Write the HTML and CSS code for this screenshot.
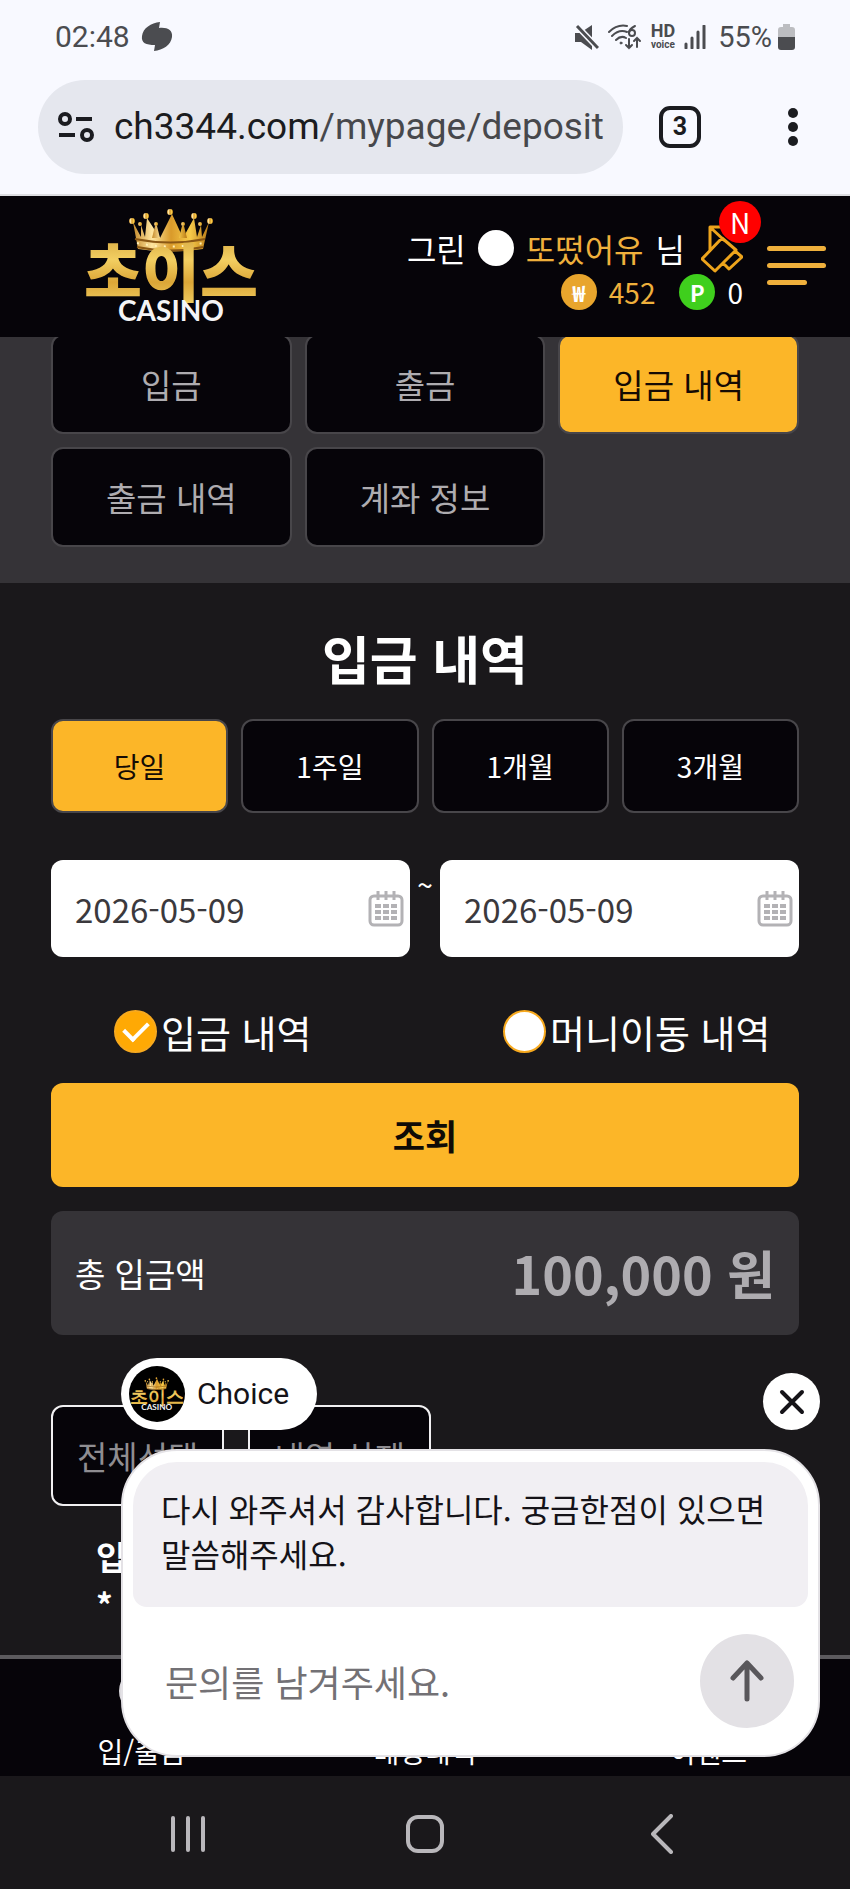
FILE: index.html
```html
<!DOCTYPE html>
<html lang="ko">
<head>
    <meta charset="UTF-8">
    <meta name="viewport" content="width=device-width, initial-scale=1.0">
    <title>입금 내역</title>
    <link rel="stylesheet" href="styles.css">
</head>
<body>

<!-- Phone status bar -->
<div class="status-bar">
    <span class="clock">02:48</span>
    <svg class="app-icon" width="32" height="30" viewBox="0 0 32 30"><path d="M19 0L18 6C26 5 32 8 31 15C30 23 22 28 13 29L14 23C5 23 0 21 1 14C2 6 10 1 19 0Z" fill="#4b4c50"/></svg>
    <div class="status-icons">
        <svg width="24" height="26" viewBox="0 0 24 26"><path d="M0 9H5L17 1V26L6 18H0Z" fill="#4b4c50"/><path d="M1 1L23 24" stroke="#f8f9ff" stroke-width="6"/><path d="M2 2L23 24" stroke="#4b4c50" stroke-width="3"/></svg>
        <svg class="wifi" width="34" height="26" viewBox="0 0 34 26" fill="none" stroke="#4b4c50" stroke-width="2" stroke-linecap="round"><path d="M1 8Q9 0 19 2M4 12Q11 5 19 8M8 16Q13 11 18 14"/><circle cx="13" cy="19" r="1" fill="#4b4c50" stroke-width="1"/><path d="M27 2Q21 5 21 9"/><circle cx="24" cy="9" r="3"/><path d="M21 15V24M18 21L21 24L24 21M29 23V14M26 17L29 14L32 17"/></svg>
        <span class="hd"><b>HD</b><small>voice</small></span>
        <svg width="22" height="24" viewBox="0 0 22 24"><path d="M2 19V23M8 13V23M14 7V23M20 1V23" stroke="#4b4c50" stroke-width="3" stroke-linecap="round"/></svg>
        <span class="percent">55%</span>
        <svg class="battery" width="17" height="26" viewBox="0 0 17 26"><path d="M5 0H12V3H14Q17 3 17 6V14H0V6Q0 3 3 3H5Z" fill="#bcbdc1"/><path d="M0 13H17V23Q17 26 14 26H3Q0 26 0 23Z" fill="#4b4c50"/></svg>
    </div>
</div>

<!-- Browser address bar -->
<div class="address-bar">
    <div class="address">
        <svg width="36" height="30" viewBox="0 0 36 30" fill="none" stroke="#1b1c20" stroke-width="4"><circle cx="7" cy="7" r="5"/><path d="M18 7H34M1 23H17"/><circle cx="29" cy="23" r="5"/></svg>
        <a class="url" href="#">ch3344.com<span>/mypage/deposit</span></a>
    </div>
    <button class="tab-count" type="button">3</button>
    <button class="more" type="button" aria-label="메뉴"><i></i><i></i><i></i></button>
</div>

<div class="site">
    <header class="header">
        <a class="logo" href="#" aria-label="초이스 CASINO">
            <svg width="176" height="118" viewBox="0 0 176 118">
                <defs>
                    <linearGradient id="gold" x1="0" y1="0" x2="0" y2="1">
                        <stop offset="0" stop-color="#c8962f"/>
                        <stop offset=".4" stop-color="#f3cf62"/>
                        <stop offset=".65" stop-color="#dba637"/>
                        <stop offset="1" stop-color="#f8dc70"/>
                    </linearGradient>
                    <linearGradient id="crownGold" x1="0" y1="0" x2="1" y2="0">
                        <stop offset="0" stop-color="#c58a2b"/>
                        <stop offset=".25" stop-color="#ffe6a0"/>
                        <stop offset=".5" stop-color="#d99a2a"/>
                        <stop offset=".75" stop-color="#f7cb4a"/>
                        <stop offset="1" stop-color="#b87916"/>
                    </linearGradient>
                </defs>
                <g id="logoArt">
                    <g fill="url(#crownGold)">
                        <path d="M49 14L57 29L57 17L61 29L63 10L76 30L88 6L99 30L110 10L113 29L117 17L118 29L125 14L119 41Q87 46 54 41Z"/>
                        <circle cx="48" cy="13" r="3"/><circle cx="62" cy="8" r="3"/><circle cx="86" cy="4" r="3"/><circle cx="110" cy="8" r="3"/><circle cx="126" cy="13" r="3"/>
                        <circle cx="56" cy="16" r="2"/><circle cx="72" cy="16" r="2"/><circle cx="99" cy="16" r="2"/><circle cx="116" cy="16" r="2"/>
                        <path d="M71 18H73L76 30H68ZM98 18H100L103 30H95Z"/>
                    </g>
                    <path d="M51 31Q87 38 121 31M53 39Q87 46 119 39" fill="none" stroke="#8a5714" stroke-width="2"/>
                    <path d="M53 35Q87 42 119 35" fill="none" stroke="#fff0b8" stroke-width="2" stroke-dasharray="2 7"/>
                    <text class="logo-name" x="87" y="88" text-anchor="middle">초이스</text>
                    <text class="logo-sub" x="87" y="113" text-anchor="middle">CASINO</text>
                </g>
            </svg>
        </a>
        <div class="user">
            <div class="user-row">
                <span>그린</span>
                <span class="level"></span>
                <span class="gold">또떴어유</span>
                <span>님</span>
                <a class="message" href="#" aria-label="쪽지">
                    <svg width="42" height="50" viewBox="0 0 42 50" fill="none" stroke="#eda41c" stroke-width="3" stroke-linejoin="round"><path d="M1 36L21 15L35 27L14 48ZM9 27V4H30V17M10 5L24 18M22 40L34 28L41 34L28 46Z"/></svg>
                    <span class="badge">N</span>
                </a>
            </div>
            <div class="user-row points">
                <span class="coin">₩</span>
                <span class="gold">452</span>
                <span class="coin coin-point">P</span>
                <span>0</span>
            </div>
        </div>
        <button class="burger" type="button" aria-label="전체 메뉴"><i></i><i></i><i></i></button>
    </header>

    <nav class="sub-nav">
        <a href="#">입금</a>
        <a href="#">출금</a>
        <a class="active" href="#">입금 내역</a>
        <a href="#">출금 내역</a>
        <a href="#">계좌 정보</a>
    </nav>

    <main class="content">
        <h1>입금 내역</h1>
        <form>
            <div class="periods">
                <button class="active" type="button">당일</button>
                <button type="button">1주일</button>
                <button type="button">1개월</button>
                <button type="button">3개월</button>
            </div>

            <div class="dates">
                <label class="date">
                    <input type="text" value="2026-05-09" aria-label="시작일">
                    <svg width="36" height="36" viewBox="0 0 36 36"><use href="#calendar"/></svg>
                </label>
                <span class="tilde">~</span>
                <label class="date">
                    <input type="text" value="2026-05-09" aria-label="종료일">
                    <svg width="36" height="36" viewBox="0 0 36 36">
                        <g id="calendar" fill="none" stroke="#b3b2b5">
                            <rect x="2" y="5" width="32" height="29" rx="4" stroke-width="3"/>
                            <path d="M10 0V9M18 0V9M26 0V9" stroke-width="3"/>
                            <path d="M7 15H29M7 21H29M7 27H29" stroke-width="4" stroke-dasharray="6 2"/>
                        </g>
                    </svg>
                </label>
            </div>

            <div class="types">
                <label><input type="radio" name="type" checked>입금 내역</label>
                <label><input type="radio" name="type">머니이동 내역</label>
            </div>

            <button class="search" type="button">조회</button>
        </form>

        <div class="total">
            <span>총 입금액</span>
            <strong>100,000 원</strong>
        </div>

        <div class="actions">
            <button type="button">전체선택</button>
            <button type="button">내역 삭제</button>
        </div>

        <div class="notice">
            <p>입금</p>
            <p>*</p>
        </div>
    </main>

    <nav class="bottom-nav">
        <a href="#"><i></i>입/출금</a>
        <a href="#"><i></i>배팅내역</a>
        <a href="#"><i></i>이벤트</a>
    </nav>

    <!-- Chat popup, lies over the page -->
    <div class="chat">
        <div class="chat-top">
            <div class="chat-name">
                <span class="avatar"><svg width="52" height="34" viewBox="0 0 176 116"><use href="#logoArt"/></svg></span>
                Choice
            </div>
            <button class="chat-close" type="button" aria-label="닫기">
                <svg width="26" height="26" viewBox="0 0 26 26"><path d="M3 3L23 23M23 3L3 23" stroke="#151318" stroke-width="4" stroke-linecap="round"/></svg>
            </button>
        </div>
        <div class="chat-card">
            <p class="chat-message">다시 와주셔서 감사합니다. 궁금한점이 있으면 말씀해주세요.</p>
            <div class="chat-form">
                <input type="text" placeholder="문의를 남겨주세요." aria-label="문의">
                <button type="button" aria-label="보내기">
                    <svg width="36" height="42" viewBox="0 0 36 42" fill="none" stroke="#59575b" stroke-width="5" stroke-linecap="round" stroke-linejoin="round"><path d="M18 39V3M4 18L18 3L32 18"/></svg>
                </button>
            </div>
        </div>
    </div>
</div>

<!-- Phone navigation keys -->
<nav class="phone-nav">
    <button type="button" aria-label="최근 앱"><svg width="36" height="38" viewBox="0 0 36 38"><path d="M3 3V35M18 3V35M33 3V35" stroke="#b9b7bb" stroke-width="4" stroke-linecap="round"/></svg></button>
    <button type="button" aria-label="홈"><svg width="38" height="38" viewBox="0 0 38 38"><rect x="2" y="2" width="34" height="34" rx="10" fill="none" stroke="#b9b7bb" stroke-width="4"/></svg></button>
    <button type="button" aria-label="뒤로"><svg width="22" height="40" viewBox="0 0 22 40"><path d="M20 2L2 20L20 38" fill="none" stroke="#b9b7bb" stroke-width="4" stroke-linejoin="round" stroke-linecap="round"/></svg></button>
</nav>

</body>
</html>
```

FILE: styles.css
```css
* {
    box-sizing: border-box;
}
body {
    margin: 0;
    background-color: #1a181b;
    color: #fff;
    font-family: "Noto Sans CJK KR", "Noto Sans", sans-serif;
    font-size: 33px;
    line-height: 48px;
}
button, input {
    margin: 0;
    padding: 0;
    border: none;
    background: none;
    color: inherit;
    font: inherit;
}
button {
    cursor: pointer;
}
a {
    color: inherit;
    text-decoration: none;
}
h1, p {
    margin: 0;
}
svg {
    display: block;
    flex: none;
}

/* Status bar */
.status-bar {
    display: flex;
    align-items: center;
    height: 80px;
    padding: 0 55px 6px;
    background-color: #f8f9ff;
    color: #4b4c50;
    font-family: Roboto, sans-serif;
    font-size: 30px;
}
.app-icon {
    margin-left: 11px;
}
.status-icons {
    display: flex;
    align-items: center;
    gap: 9px;
    margin-left: auto;
}
.hd {
    font-size: 18px;
    line-height: 16px;
    text-align: center;
}
.hd b, .hd small {
    display: block;
}
.hd small {
    font-size: 10px;
    font-weight: bold;
    line-height: 12px;
}
.percent {
    font-size: 29px;
    margin-left: 3px;
}
.battery {
    margin-left: -3px;
}

/* Address bar */
.address-bar {
    display: flex;
    align-items: center;
    padding: 0 52px 20px 38px;
    border-bottom: 2px solid #dddee2;
    background-color: #f8f9ff;
    color: #1b1c20;
    font-family: Roboto, sans-serif;
}
.address {
    display: flex;
    flex: 1;
    align-items: center;
    gap: 20px;
    min-width: 0;
    height: 94px;
    padding: 0 18px 0 20px;
    border-radius: 47px;
    background-color: #e5e7ee;
}
.url {
    flex: 1;
    overflow: hidden;
    font-size: 37px;
    white-space: nowrap;
}
.url span {
    color: #47484c;
}
.tab-count {
    width: 42px;
    height: 42px;
    margin: 0 87px 0 36px;
    border: 4px solid #1b1c20;
    border-radius: 11px;
    font-size: 25px;
    font-weight: bold;
    line-height: 34px;
}
.more {
    display: grid;
    gap: 4px;
}
.more i {
    width: 10px;
    height: 10px;
    border-radius: 50%;
    background-color: #1b1c20;
}

/* Site header */
.site {
    position: relative;
}
.header {
    position: relative;
    z-index: 1;
    display: flex;
    align-items: flex-start;
    height: 141px;
    padding: 12px 24px 0 84px;
    background-color: #060409;
}
.logo-name {
    fill: url(#gold);
    font-size: 63px;
    font-weight: 900;
}
.logo-sub {
    fill: #f4f4f6;
    font-family: Lato, sans-serif;
    font-size: 28px;
    font-weight: bold;
}
.user {
    margin: 18px 24px 0 auto;
}
.user-row {
    display: flex;
    align-items: center;
    justify-content: flex-end;
    gap: 12px;
    height: 44px;
    font-size: 32px;
}
.points {
    font-size: 28px;
}
.gold {
    color: #efb03c;
}
.level {
    width: 36px;
    height: 36px;
    border-radius: 50%;
    background-color: #fff;
}
.message {
    position: relative;
    margin-left: 4px;
}
.badge {
    position: absolute;
    top: -22px;
    right: -18px;
    width: 42px;
    height: 42px;
    border-radius: 50%;
    background-color: #f00;
    font-size: 28px;
    line-height: 42px;
    text-align: center;
}
.coin {
    width: 36px;
    height: 36px;
    border-radius: 50%;
    background-color: #e8a52d;
    font-size: 22px;
    font-weight: bold;
    line-height: 36px;
    text-align: center;
}
.coin-point {
    margin-left: 12px;
    background-color: #3fcf1d;
}
.burger {
    display: grid;
    gap: 12px;
    width: 59px;
    margin-top: 38px;
}
.burger i {
    height: 5px;
    border-radius: 3px;
    background-color: #efb03c;
}
.burger i:last-child {
    width: 40px;
}

/* Sub menu, its top edge runs under the header */
.sub-nav {
    display: grid;
    grid-template-columns: repeat(3, 1fr);
    gap: 13px;
    margin-top: -3px;
    padding: 0 51px 36px;
    background-color: #353337;
}
.sub-nav a {
    height: 100px;
    border: 2px solid #48464a;
    border-radius: 12px;
    background-color: #060409;
    color: #aeacb0;
    line-height: 96px;
    text-align: center;
}
.sub-nav .active, .periods .active {
    background-color: #fcb628;
    color: #150b04;
}

/* Deposit history */
.content {
    padding: 37px 51px 27px;
}
h1 {
    margin-bottom: 23px;
    font-size: 52px;
    font-weight: bold;
    line-height: 76px;
    text-align: center;
}
.periods {
    display: grid;
    grid-template-columns: repeat(4, 1fr);
    gap: 13px;
}
.periods button {
    height: 94px;
    border: 2px solid #48464a;
    border-radius: 12px;
    background-color: #060409;
    font-size: 28px;
}
.dates {
    display: flex;
    margin: 47px 0 53px;
}
.date {
    display: flex;
    flex: 1;
    align-items: center;
    min-width: 0;
    height: 97px;
    padding: 0 6px 0 24px;
    border-radius: 12px;
    background-color: #fff;
    color: #3b393d;
}
.date input {
    flex: 1;
    min-width: 0;
}
.tilde {
    width: 30px;
    font-size: 28px;
    text-align: center;
}
.types {
    display: grid;
    grid-template-columns: 1fr 1fr;
    gap: 30px;
    margin-bottom: 30px;
}
.types label {
    display: flex;
    align-items: center;
    gap: 4px;
    height: 43px;
    padding-left: 63px;
    font-size: 38px;
    white-space: nowrap;
}
.types input {
    display: grid;
    place-items: center;
    width: 43px;
    height: 43px;
    border: 2px solid #f7a91e;
    border-radius: 50%;
    background-color: #fff;
    appearance: none;
}
.types input:checked {
    background-color: #ffa904;
}
.types input:checked::after {
    content: "";
    width: 20px;
    height: 11px;
    margin-bottom: 6px;
    border: solid #fff;
    border-width: 0 0 4px 4px;
    transform: rotate(-45deg);
}
.search {
    display: block;
    width: 100%;
    height: 104px;
    margin-bottom: 24px;
    border-radius: 12px;
    background-color: #fcb628;
    color: #100b06;
    font-size: 35px;
    font-weight: bold;
}
.total {
    display: flex;
    align-items: center;
    justify-content: space-between;
    height: 124px;
    margin-bottom: 70px;
    padding: 0 24px;
    border-radius: 12px;
    background-color: #353337;
}
.total strong {
    color: #aeacb0;
    font-size: 52px;
}
.actions {
    display: flex;
    gap: 24px;
    margin-bottom: 26px;
}
.actions button {
    height: 101px;
    padding: 0 24px;
    border: 2px solid #f1f0f2;
    border-radius: 12px;
    background-color: #060409;
    color: #8f8d91;
}
.notice {
    padding-left: 45px;
    font-weight: bold;
}

/* Bottom menu */
.bottom-nav {
    display: grid;
    grid-template-columns: repeat(3, 1fr);
    height: 121px;
    border-top: 4px solid #5c5a5e;
    background-color: #060409;
    font-size: 28px;
    line-height: 40px;
    text-align: center;
}
.bottom-nav i {
    display: block;
    width: 46px;
    height: 46px;
    margin: 9px auto 17px;
    border: 2px solid #dddbdf;
    border-radius: 50%;
}

/* Chat popup */
.chat {
    position: absolute;
    right: 30px;
    bottom: 19px;
    left: 121px;
    color: #151318;
}
.chat-top {
    display: flex;
    align-items: flex-end;
    justify-content: space-between;
    margin-bottom: 19px;
}
.chat-name {
    display: flex;
    align-items: center;
    gap: 12px;
    height: 72px;
    padding: 0 28px 0 8px;
    border-radius: 36px;
    background-color: #fff;
    font-family: Roboto, sans-serif;
    font-size: 30px;
}
.avatar {
    display: grid;
    place-items: center;
    width: 56px;
    height: 56px;
    border-radius: 50%;
    background-color: #000;
}
.chat-close {
    display: grid;
    place-items: center;
    width: 57px;
    height: 57px;
    border-radius: 50%;
    background-color: #fff;
}
.chat-card {
    padding: 11px 10px;
    border: 2px solid #e4e2e6;
    border-radius: 56px;
    background-color: #fff;
}
.chat-message {
    height: 145px;
    padding: 24px 28px;
    border-radius: 44px 44px 14px 14px;
    background-color: #f1eff3;
    font-size: 32px;
    line-height: 45px;
}
.chat-form {
    display: flex;
    align-items: center;
    gap: 20px;
    padding: 27px 14px 16px 32px;
}
.chat-form input {
    flex: 1;
    min-width: 0;
    font-size: 36px;
}
.chat-form input::placeholder {
    color: #737175;
    opacity: 1;
}
.chat-form button {
    display: grid;
    place-items: center;
    width: 94px;
    height: 94px;
    border-radius: 50%;
    background-color: #e3e1e5;
}

/* Phone keys */
.phone-nav {
    display: grid;
    grid-template-columns: repeat(3, 1fr);
    height: 113px;
    padding: 2px 70px 0;
}
.phone-nav button {
    display: grid;
    place-items: center;
}
```
